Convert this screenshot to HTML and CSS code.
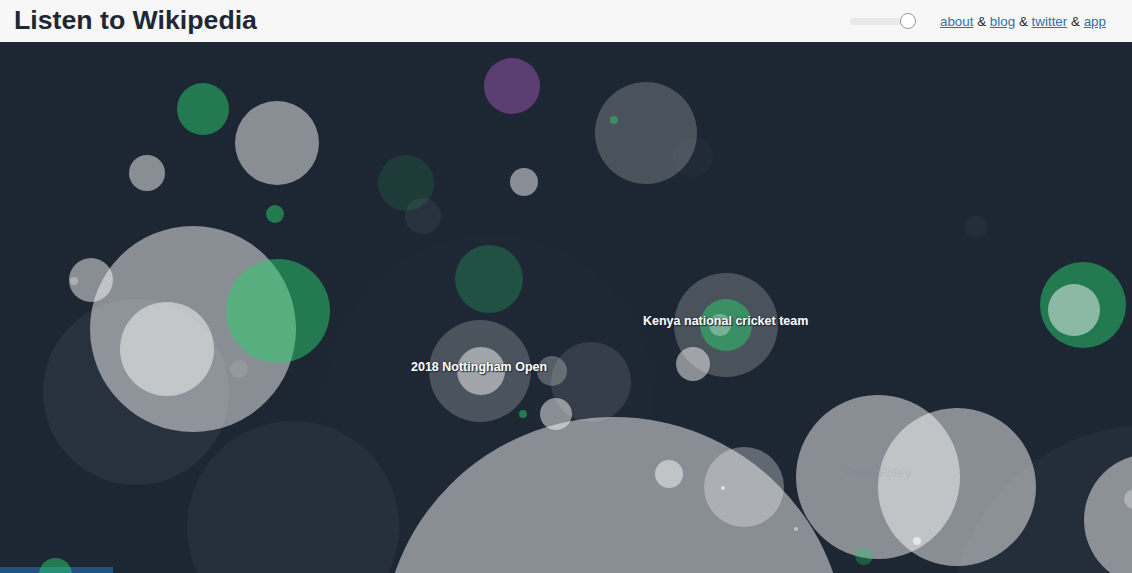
FILE: index.html
```html
<!DOCTYPE html>
<html>
<head>
<meta charset="utf-8">
<title>Listen to Wikipedia</title>
<link rel="stylesheet" href="styles.css">
</head>
<body>
<header class="topbar">
  <h1 class="title">Listen to Wikipedia</h1>
  <div class="controls">
    <div class="slider"><span class="track"></span><span class="thumb"></span></div>
    <nav class="links">
      <a href="#">about</a> &amp; <a href="#">blog</a> &amp; <a href="#">twitter</a> &amp; <a href="#">app</a>
    </nav>
  </div>
</header>
<main class="stage">
  <svg class="field" width="1132" height="531" viewBox="0 42 1132 531" xmlns="http://www.w3.org/2000/svg">
    <circle class="w01" cx="490" cy="400" r="165"/>
    <circle class="w03" cx="1150" cy="625" r="200"/>
    <circle class="w04" cx="293" cy="527" r="106"/>
    <circle class="w05" cx="136" cy="392" r="93"/>
    <circle class="w03" cx="976" cy="227" r="11"/>
    <circle class="w02" cx="693" cy="157" r="20"/>

    <circle class="g50" cx="203" cy="109" r="26"/>
    <circle class="w48" cx="277" cy="143" r="42"/>
    <circle class="p50" cx="512" cy="86" r="28"/>
    <circle class="w48" cx="147" cy="173" r="18"/>
    <circle class="g13" cx="406" cy="183" r="28"/>
    <circle class="w05" cx="423" cy="216" r="18"/>
    <circle class="w48" cx="524" cy="182" r="14"/>
    <circle class="g50" cx="275" cy="214" r="9"/>
    <circle class="w20" cx="646" cy="133" r="51"/>
    <circle class="g50" cx="614" cy="120" r="4"/>

    <circle class="w48" cx="193" cy="329" r="103"/>
    <circle class="w48" cx="167" cy="349" r="47"/>
    <circle class="w48" cx="91" cy="280" r="22"/>
    <circle class="w30" cx="74" cy="281" r="4"/>
    <circle class="w10" cx="239" cy="369" r="9"/>
    <circle class="g50" cx="278" cy="311" r="52"/>

    <circle class="g26" cx="489" cy="279" r="34"/>
    <circle class="w20" cx="480" cy="371" r="51"/>
    <circle class="w48" cx="481" cy="371" r="24"/>
    <circle class="w25" cx="552" cy="371" r="15"/>
    <circle class="w10" cx="591" cy="382" r="40"/>
    <circle class="g50" cx="523" cy="414" r="4"/>
    <circle class="w48" cx="556" cy="414" r="16"/>

    <circle class="w20" cx="726" cy="325" r="52"/>
    <circle class="g50" cx="726" cy="325" r="26"/>
    <circle class="w30" cx="720" cy="325" r="11"/>
    <circle class="w48" cx="693" cy="364" r="17"/>

    <circle class="w48" cx="614" cy="649" r="232"/>
    <circle class="w015" cx="597" cy="527" r="40"/>
    <circle class="w48" cx="669" cy="474" r="14"/>
    <circle class="w30" cx="744" cy="487" r="40"/>
    <circle class="w60" cx="723" cy="488" r="2"/>
    <circle class="w48" cx="796" cy="529" r="2"/>

    <circle class="w48" cx="878" cy="477" r="82"/>
    <circle class="w48" cx="957" cy="487" r="79"/>
    <circle class="w60" cx="917" cy="541" r="4"/>
    <circle class="g30" cx="864" cy="556" r="9"/>
    <circle class="w48" cx="1150" cy="520" r="66"/>
    <circle class="w30" cx="1134" cy="499" r="10"/>

    <circle class="g50" cx="1083" cy="305" r="43"/>
    <circle class="w48" cx="1074" cy="310" r="26"/>
  </svg>
  <span class="label label-notts">2018 Nottingham Open</span>
  <span class="label label-kenya">Kenya national cricket team</span>
  <span class="ghost">Peter Foley</span>
  <div class="dock"><span class="dock-dot"></span></div>
</main>
</body>
</html>
```
FILE: styles.css
```css
html, body {
  margin: 0;
  padding: 0;
  background: #1d2734;
  overflow: hidden;
}
body {
  width: 1132px;
  height: 573px;
  font-family: "Liberation Sans", Arial, sans-serif;
}
.topbar {
  height: 42px;
  background: #f7f7f7;
  display: flex;
  align-items: center;
  justify-content: space-between;
  padding: 0 26px 0 14px;
  box-sizing: border-box;
}
.title {
  margin: 0;
  font-size: 26.7px;
  font-weight: bold;
  color: #1e2835;
  line-height: 1;
  position: relative;
  top: -1px;
}
.controls {
  display: flex;
  align-items: center;
  gap: 24px;
}
.slider {
  position: relative;
  width: 66px;
  height: 18px;
  display: flex;
  align-items: center;
}
.track {
  display: block;
  width: 62px;
  height: 7px;
  border-radius: 4px;
  background: #e9e9e9;
}
.thumb {
  position: absolute;
  right: 0;
  top: 1px;
  width: 14px;
  height: 14px;
  border-radius: 50%;
  background: #fff;
  border: 1px solid #9a9a9a;
}
.links {
  font-size: 13.4px;
  color: #222;
}
.links a {
  color: #3270a8;
  text-decoration: underline;
}
.stage {
  position: relative;
  width: 1132px;
  height: 531px;
  overflow: hidden;
}
.field {
  display: block;
}
.w01 { fill: #fff; fill-opacity: .006; }
.w015 { fill: #fff; fill-opacity: .015; }
.w02 { fill: #fff; fill-opacity: .02; }
.w03 { fill: #fff; fill-opacity: .03; }
.w04 { fill: #fff; fill-opacity: .04; }
.w05 { fill: #fff; fill-opacity: .05; }
.w10 { fill: #fff; fill-opacity: .1; }
.w20 { fill: #fff; fill-opacity: .2; }
.w25 { fill: #fff; fill-opacity: .25; }
.w30 { fill: #fff; fill-opacity: .3; }
.w48 { fill: #fff; fill-opacity: .48; }
.w60 { fill: #fff; fill-opacity: .6; }
.g13 { fill: #29cd6c; fill-opacity: .12; }
.g26 { fill: #29cd6c; fill-opacity: .25; }
.g30 { fill: #29cd6c; fill-opacity: .3; }
.g50 { fill: #29cd6c; fill-opacity: .5; }
.p50 { fill: #9957b0; fill-opacity: .5; }
.label {
  position: absolute;
  color: #fff;
  font-weight: bold;
  font-size: 12.5px;
  white-space: nowrap;
  line-height: 15px;
  text-shadow: 0 0 2px #1d2734, 1px 1px 1px #1d2734;
}
.label-notts { left: 411px; top: 318px; }
.label-kenya { left: 643px; top: 272px; }
.ghost {
  position: absolute;
  left: 844px;
  top: 424px;
  font-size: 12.5px;
  font-weight: bold;
  color: rgba(120, 124, 131, 0.12);
  white-space: nowrap;
}
.dock {
  position: absolute;
  left: 0;
  bottom: 0;
  width: 113px;
  height: 6px;
  background: #1f5480;
  overflow: visible;
}
.dock-dot {
  position: absolute;
  left: 39px;
  top: -9px;
  width: 33px;
  height: 33px;
  border-radius: 50%;
  background: rgba(41, 205, 108, 0.5);
}
```
